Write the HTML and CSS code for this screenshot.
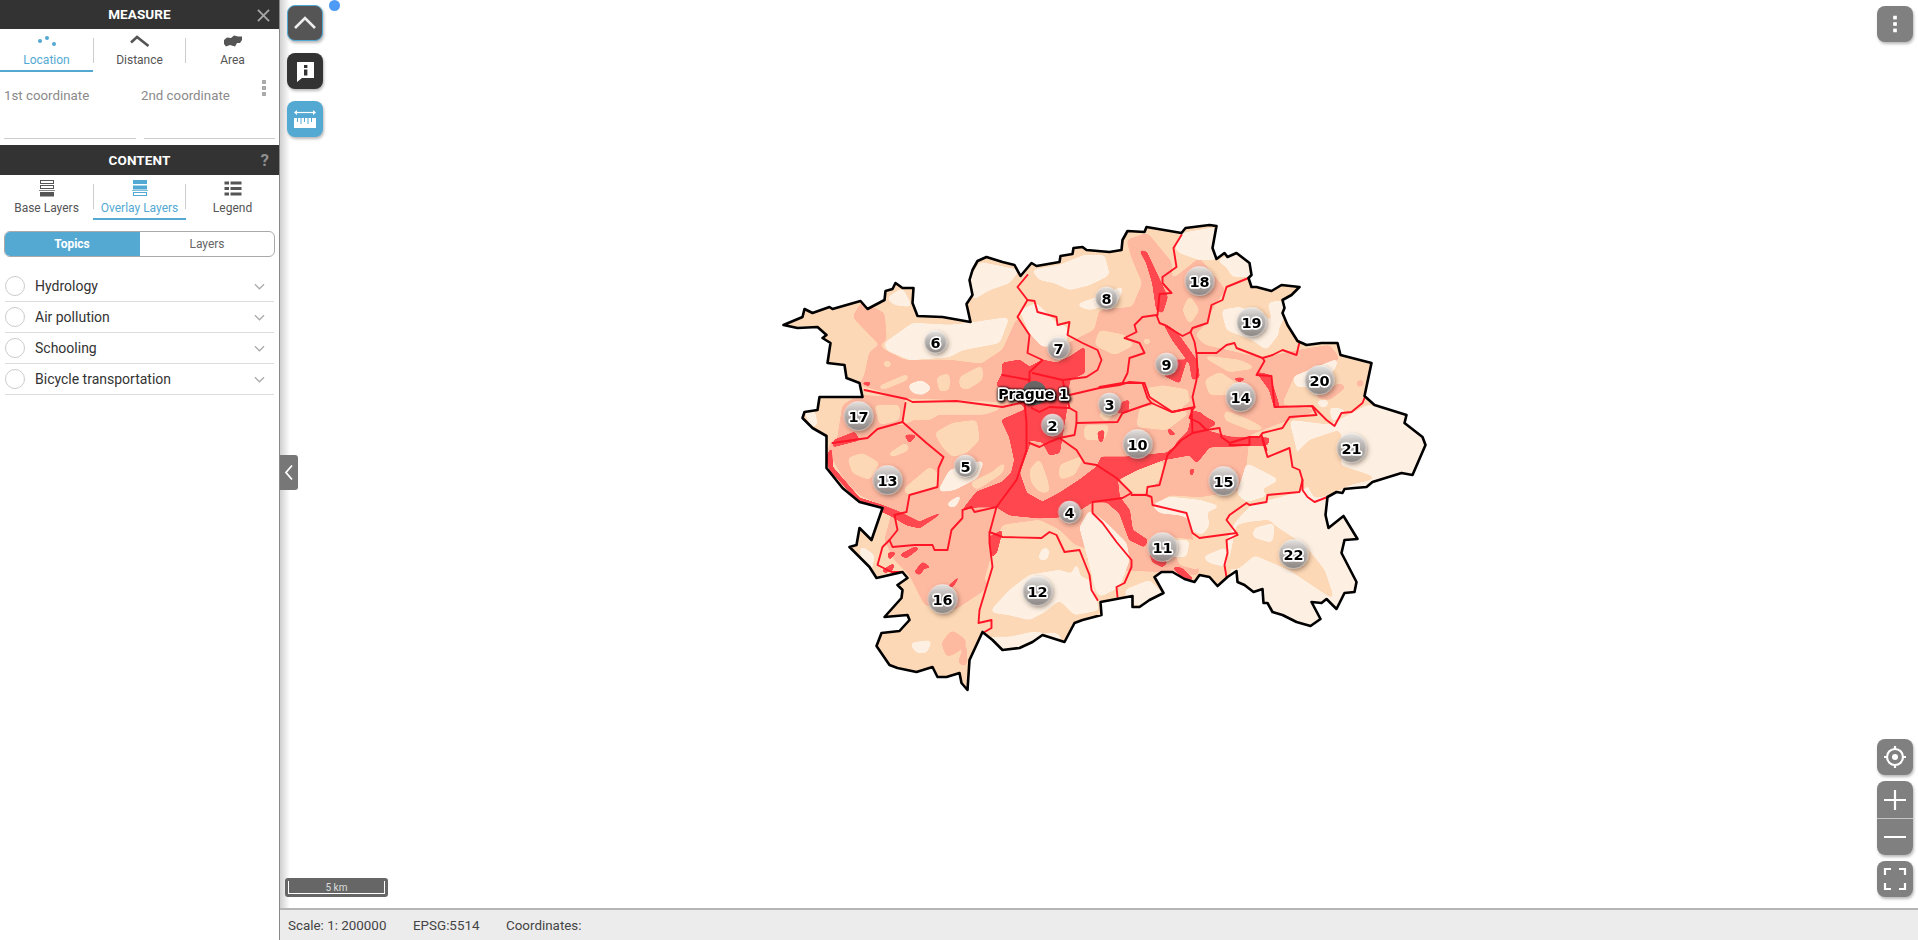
FILE: index.html
```html
<!DOCTYPE html>
<html lang="en">
<head>
<meta charset="utf-8">
<title>Prague map</title>
<link rel="stylesheet" href="styles.css">
</head>
<body>
<div class="app">
  <aside class="sidebar">
    <header class="panel-head panel-head-measure">
      <span class="panel-title">MEASURE</span>
      <svg class="panel-close" viewBox="0 0 14 14"><path d="M1 1 13 13M13 1 1 13"/></svg>
    </header>
    <nav class="tabs tabs-measure">
      <div class="tab active"><svg class="tab-icon" viewBox="0 0 20 12"><circle cx="3" cy="6" r="2"/><circle cx="10" cy="3" r="2"/><circle cx="17" cy="9" r="2"/></svg><span>Location</span></div>
      <div class="tab sep"><svg class="tab-icon" viewBox="0 0 20 12"><path class="line" d="M1 7.5 7 2 18.5 11"/></svg><span>Distance</span></div>
      <div class="tab"><svg class="tab-icon" viewBox="0 0 20 12"><path d="M1 5 4 2.5 8 3 11 .5 15 1.500 19 1.500 19 5 17 8 14 8 12 11.500 7 10 3 11.500 1 9Z"/></svg><span>Area</span></div>
    </nav>
    <section class="coords">
      <div class="coord"><label>1st coordinate</label></div>
      <div class="coord coord-second"><label>2nd coordinate</label></div>
      <div class="coord-more"><i></i><i></i><i></i></div>
    </section>
    <header class="panel-head panel-head-content">
      <span class="panel-title">CONTENT</span>
      <span class="panel-help">?</span>
    </header>
    <nav class="tabs tabs-content">
      <div class="tab"><svg class="tab-icon layers" viewBox="0 0 20 18"><rect class="o" x="3.5" y=".5" width="13" height="3"/><rect class="o" x="3.500" y="5.500" width="13" height="3"/><path class="hair" d="M2 10.500H18"/><rect x="3" y="12" width="14" height="4.500"/></svg><span>Base Layers</span></div>
      <div class="tab sep active"><svg class="tab-icon layers" viewBox="0 0 20 18"><rect x="3" y="0" width="14" height="4"/><rect x="3" y="5.500" width="14" height="4"/><path class="hair" d="M2 10.500H18"/><rect class="o" x="3.500" y="12.500" width="13" height="3"/></svg><span>Overlay Layers</span></div>
      <div class="tab"><svg class="tab-icon layers" viewBox="0 0 20 18"><rect x="1.500" y="1.500" width="4.500" height="3"/><rect x="7.500" y="1.500" width="11" height="3"/><rect x="1.500" y="7" width="4.500" height="3"/><rect x="7.500" y="7" width="11" height="3"/><rect x="1.500" y="12.500" width="4.500" height="3"/><rect x="7.500" y="12.500" width="11" height="3"/></svg><span>Legend</span></div>
    </nav>
    <div class="segment"><span class="seg seg-on">Topics</span><span class="seg">Layers</span></div>
    <ul class="topics">
      <li class="topic"><i class="radio"></i><span class="topic-name">Hydrology</span><svg class="chev" viewBox="0 0 12 7"><path d="M1 1 6 6 11 1"/></svg></li>
      <li class="topic"><i class="radio"></i><span class="topic-name">Air pollution</span><svg class="chev" viewBox="0 0 12 7"><path d="M1 1 6 6 11 1"/></svg></li>
      <li class="topic"><i class="radio"></i><span class="topic-name">Schooling</span><svg class="chev" viewBox="0 0 12 7"><path d="M1 1 6 6 11 1"/></svg></li>
      <li class="topic"><i class="radio"></i><span class="topic-name">Bicycle transportation</span><svg class="chev" viewBox="0 0 12 7"><path d="M1 1 6 6 11 1"/></svg></li>
    </ul>
  </aside>

  <main class="main">
    <div class="canvas">
      <svg class="map" viewBox="280 0 1638 908" xmlns="http://www.w3.org/2000/svg">
        <defs>
          <clipPath id="city"><path d="M784 325 803 317 805 309 813 313 830 307 833 309 861 301 868 309 885 300 886 291 893 289 896 283 903 288 914 288 913 303 918 316 943 317 971 322 967 304 973 295 970 280 973 270 978 261 987 257 1003 262 1015 265 1021 276 1032 263 1037 266 1060 262 1061 256 1073 254 1074 248 1083 247 1087 250 1110 252 1122 250 1123 240 1128 231 1145 232 1147 227 1182 233 1186 228 1210 225 1217 226 1213 248 1217 259 1225 253 1228 257 1237 253 1250 263 1252 275 1249 278 1252 287 1257 287 1272 291 1282 285 1300 287 1292 295 1283 300 1285 308 1283 313 1288 325 1298 341 1307 345 1322 343 1338 343 1341 355 1372 363 1365 396 1375 405 1407 415 1405 423 1423 437 1426 445 1413 475 1402 473 1373 482 1367 487 1355 488 1345 489 1343 493 1337 492 1328 497 1326 515 1329 528 1344 516 1358 539 1345 540 1342 553 1357 582 1355 592 1345 593 1337 609 1327 599 1322 603 1312 602 1321 619 1311 626 1297 622 1283 615 1273 612 1268 603 1264 603 1263 589 1254 592 1245 585 1238 582 1237 571 1228 577 1218 586 1210 577 1200 575 1195 582 1185 579 1173 572 1162 572 1155 577 1164 593 1150 600 1140 607 1133 607 1133 596 1101 602 1102 615 1083 620 1075 623 1065 642 1043 635 1033 642 1020 648 1003 650 993 640 983 632 970 660 968 690 962 683 960 673 947 677 938 677 933 667 917 672 898 668 890 665 877 646 882 633 900 631 910 620 908 615 885 617 902 598 903 590 898 585 908 578 903 572 877 578 870 567 858 555 850 547 857 545 860 528 872 540 883 508 860 502 843 488 827 468 827 436 813 428 803 418 805 412 818 410 820 397 847 397 863 397 860 383 847 378 845 365 828 363 831 343 823 338 827 335 818 327 798 328Z"/></clipPath>
          <filter id="goo" filterUnits="userSpaceOnUse" x="700" y="150" width="800" height="600" color-interpolation-filters="sRGB">
            <feGaussianBlur stdDeviation="2.400"/>
            <feColorMatrix type="matrix" values="1 0 0 0 0 0 1 0 0 0 0 0 1 0 0 0 0 0 12 -5"/>
          </filter>
          <filter id="gooRed" filterUnits="userSpaceOnUse" x="700" y="150" width="800" height="600" color-interpolation-filters="sRGB">
            <feGaussianBlur stdDeviation="1.400"/>
            <feColorMatrix type="matrix" values="1 0 0 0 0 0 1 0 0 0 0 0 1 0 0 0 0 0 12 -4"/>
          </filter>
          <linearGradient id="bub" x1="0" y1="0" x2="0" y2="1">
            <stop offset="0" stop-color="#e6e4e3"/>
            <stop offset=".35" stop-color="#bdb9b7"/>
            <stop offset="1" stop-color="#8d8886"/>
          </linearGradient>
          <filter id="bubshadow" x="-50%" y="-50%" width="200%" height="200%">
            <feDropShadow dx="1.500" dy="2" stdDeviation="2" flood-color="#3a2a20" flood-opacity=".5"/>
          </filter>
        </defs>

        <g clip-path="url(#city)">
          <rect class="zone-orange" x="760" y="200" width="700" height="520"/>
          <g class="zone-light" filter="url(#goo)">
            <path d="M1236 522 1252 505 1300 492 1320 480 1300 460 1290 420 1330 425 1368 405 1440 420 1440 640 1210 640 1232 570 1228 540Z"/>
            <path d="M784 325 818 327 831 343 845 365 860 383 850 372 836 345 810 332Z"/>
          </g>
          <g class="zone-salmon" filter="url(#goo)">
            <path d="M1127 240 1148 233 1172 262 1172 280 1200 258 1226 290 1215 305 1205 325 1195 335 1205 345 1262 358 1300 350 1330 345 1340 358 1325 372 1295 375 1282 405 1320 410 1275 425 1250 435 1247 463 1243 490 1200 497 1170 495 1155 505 1190 520 1195 550 1200 575 1165 572 1120 570 1105 535 1090 560 1060 555 1010 555 1000 560 985 590 955 610 925 605 910 575 895 560 885 540 893 510 860 495 845 480 828 450 833 440 870 430 905 425 925 415 985 415 1000 410 1010 385 983 363 1003 350 1018 317 1030 335 1065 345 1095 330 1100 310 1133 307 1143 283 1133 260Z"/>
            <path d="M853 317 862 302 885 313 887 340 870 352 865 375 860 385 905 398 960 400 1005 402 1015 380 990 365 950 360 905 360 885 350Z"/>
            <path d="M843 405 860 395 905 398 903 420 868 432 838 438Z"/>
            <path d="M1340 383 1347 387 1330 400 1313 397Z"/>
            <path d="M1357 380 1365 380 1363 387 1357 387Z"/>
            <path d="M942 643 952 630 967 640 957 653 947 657Z"/>
            <path d="M958 663 968 640 967 667Z"/>
            <path d="M1245 540 1257 542 1263 545 1255 550Z"/>
          </g>
          <g class="zone-orange" filter="url(#goo)">
            <path d="M848 458 863 453 880 463 870 480 853 473Z"/>
            <path d="M887 455 907 442 910 450 893 457Z"/>
            <path d="M903 490 930 467 938 472 937 488 910 495Z"/>
            <path d="M935 433 953 423 977 420 980 440 967 453 953 457 943 447Z"/>
            <path d="M907 407 930 405 947 410 930 420 910 420Z"/>
            <path d="M970 483 993 472 1007 460 1003 473 977 490Z"/>
            <path d="M1030 470 1040 458 1048 480 1050 493 1040 492 1032 483Z"/>
            <path d="M1120 480 1137 470 1165 460 1160 480 1147 493 1133 493 1123 485Z"/>
            <path d="M1003 525 1040 520 1060 530 1075 545 1090 550 1085 565 1055 560 1040 565 1005 575 995 590 985 580 995 545Z"/>
            <path d="M883 360 893 362 890 368 885 367Z"/>
            <path d="M877 387 910 373 908 380 883 390Z"/>
            <path d="M937 377 950 373 950 390 940 392Z"/>
            <path d="M960 377 983 365 983 380 967 390 960 387Z"/>
            <path d="M875 405 900 405 900 420 880 425Z"/>
            <path d="M1205 380 1220 372 1240 385 1228 395 1210 395Z"/>
            <path d="M1225 410 1250 420 1268 430 1250 430 1225 420Z"/>
            <path d="M1200 355 1240 360 1258 368 1230 372Z"/>
            <path d="M1237 525 1250 522 1270 520 1277 527 1305 545 1325 570 1335 600 1320 590 1290 570 1255 555 1240 568 1228 570Z"/>
            <path d="M1310 440 1340 430 1345 450 1340 465 1378 478 1350 485 1330 495 1315 498 1305 480 1295 455Z"/>
            <path d="M1100 330 1125 335 1135 345 1115 355 1095 345Z"/>
            <path d="M1160 385 1190 390 1185 405 1160 400Z"/>
            <path d="M1085 425 1110 425 1105 440 1085 440Z"/>
            <path d="M1190 295 1200 310 1190 325 1183 310Z"/>
            <path d="M1170 537 1195 540 1200 570 1180 565Z"/>
            <path d="M1060 465 1085 455 1075 475 1060 480Z"/>
            <path d="M1140 408 1168 403 1190 413 1167 430 1137 427Z"/>
            <path d="M1147 387 1167 387 1193 400 1177 410 1153 400Z"/>
            <path d="M1097 413 1117 410 1107 422Z"/>
            <path d="M1143 338 1155 340 1145 346Z"/>
          </g>
          <g class="zone-light" filter="url(#goo)">
            <path d="M885 343 913 323 950 325 970 323 1010 317 1000 343 963 350 950 357 910 360 887 350Z"/>
            <path d="M973 300 970 280 980 262 1020 270 1010 283 990 290Z"/>
            <path d="M887 298 903 288 913 307 895 305Z"/>
            <path d="M908 385 922 380 933 388 923 395 913 393Z"/>
            <path d="M928 375 947 367 940 370 930 377Z"/>
            <path d="M1032 270 1060 265 1085 255 1105 255 1110 275 1090 285 1070 290 1055 283 1040 280Z"/>
            <path d="M1075 305 1095 298 1115 290 1125 285 1118 302 1090 310Z"/>
            <path d="M1020 310 1037 303 1057 323 1068 327 1067 343 1043 347 1030 333Z"/>
            <path d="M1183 233 1217 227 1213 248 1217 260 1200 260 1180 253 1175 247Z"/>
            <path d="M1217 260 1237 253 1250 263 1252 277 1233 277 1227 267Z"/>
            <path d="M1222 310 1240 307 1267 317 1280 333 1267 350 1253 340 1227 330Z"/>
            <path d="M1268 303 1283 300 1285 317 1277 333Z"/>
            <path d="M1293 377 1317 367 1340 358 1333 373 1313 387 1297 387Z"/>
            <path d="M1317 400 1330 400 1327 407 1320 407Z"/>
            <path d="M1330 407 1348 410 1333 423Z"/>
            <path d="M1152 505 1170 497 1200 500 1217 505 1225 505 1207 512 1210 525 1203 535 1192 530 1190 518 1180 515 1160 513Z"/>
            <path d="M1247 463 1280 480 1260 490 1270 495 1247 502 1237 493 1243 477Z"/>
            <path d="M1255 528 1275 523 1273 543 1263 540 1253 537Z"/>
            <path d="M1080 527 1090 510 1107 523 1127 543 1130 560 1120 587 1100 597 1093 577 1088 557Z"/>
            <path d="M990 612 1010 590 1030 575 1060 570 1090 580 1100 610 1075 615 1060 600 1045 612 1030 620 1010 615Z"/>
            <path d="M987 637 1010 637 1033 632 1057 633 1067 642 1043 635 1033 642 1020 648 1003 650Z"/>
            <path d="M1077 560 1083 587 1080 613 1068 607 1068 590Z"/>
            <path d="M1043 548 1050 548 1048 560 1038 560Z"/>
            <path d="M910 643 933 640 927 653 917 653Z"/>
            <path d="M860 545 875 555 872 572 862 560Z"/>
            <path d="M1125 590 1150 580 1165 595 1140 605 1130 605Z"/>
            <path d="M1170 540 1190 540 1187 557 1173 557Z"/>
            <path d="M1203 557 1227 547 1227 567 1210 563Z"/>
            <path d="M805 412 815 410 818 425 812 428Z"/>
            <path d="M950 470 985 460 978 478 955 490 938 492Z"/>
            <path d="M945 505 965 492 955 508Z"/>
          </g>
          <g class="zone-red" filter="url(#gooRed)">
            <path d="M1002 420 1025 410 1028 428 1030 445 1020 473 1027 493 1043 502 1060 493 1080 480 1097 467 1102 457 1127 457 1167 453 1187 438 1193 413 1200 412 1215 425 1205 430 1230 437 1270 438 1268 445 1210 447 1197 463 1190 455 1163 460 1137 470 1118 480 1120 497 1130 510 1133 530 1148 540 1145 547 1130 540 1120 513 1107 502 1093 502 1080 510 1060 517 1040 518 1010 515 997 507 977 507 963 510 977 492 1003 482 1012 473 1015 460 1010 437Z"/>
            <path d="M997 385 1003 373 1003 363 1020 360 1030 367 1043 360 1057 363 1070 357 1085 347 1085 373 1070 380 1067 410 1060 453 1050 455 1043 442 1030 440 1025 407Z"/>
            <path d="M835 440 855 432 860 440 833 447Z"/>
            <path d="M827 457 832 447 833 467 860 498 882 505 900 512 920 522 947 510 920 528 907 525 890 515 860 502 830 470Z"/>
            <path d="M860 383 871 382 870 386Z"/>
            <path d="M905 435 917 435 910 443Z"/>
            <path d="M1140 250 1147 252 1157 273 1168 297 1163 313 1157 310 1153 283 1147 263Z"/>
            <path d="M1163 322 1177 332 1197 360 1200 377 1193 380 1190 363 1173 340Z"/>
            <path d="M1173 360 1187 360 1182 376 1180 383 1163 375 1177 373Z"/>
            <path d="M1257 372 1270 375 1280 407 1275 408 1270 390Z"/>
            <path d="M1233 378 1247 378 1240 382Z"/>
            <path d="M1193 410 1217 423 1203 430 1193 443 1175 445 1190 430Z"/>
            <path d="M1098 432 1105 430 1103 442 1100 442Z"/>
            <path d="M1168 427 1177 435 1170 435Z"/>
            <path d="M1190 470 1195 468 1192 478Z"/>
            <path d="M1123 402 1130 400 1128 413 1117 413Z"/>
            <path d="M883 570 895 563 893 570 885 573Z"/>
            <path d="M888 553 897 552 890 560Z"/>
            <path d="M900 555 915 547 920 548 907 558Z"/>
            <path d="M915 572 923 562 932 568 925 568 920 575Z"/>
            <path d="M948 587 963 573 953 587Z"/>
            <path d="M990 537 1003 530 997 553 992 557Z"/>
            <path d="M1150 553 1168 562 1163 567 1153 562Z"/>
            <path d="M1173 567 1182 568 1195 580 1183 578Z"/>
          </g>
        </g>

        <g class="borders">
          <path d="M1028 275 1018 287 1028 300 1035 301 1038 312 1057 317 1058 325 1070 322 1068 335 1083 343 1098 350 1102 360 1098 370 1087 377 1063 380 1033 373"/>
          <path d="M1028 300 1018 317 1030 335 1028 353 1043 360 1030 372 1030 380 1003 375"/>
          <path d="M865 390 907 399 913 402 957 401 1003 407 1025 402 1027 423 1027 450 1017 480 997 507 990 533 990 543 993 567 980 610 979 623 992 620 992 628 985 632"/>
          <path d="M906 403 903 422 878 429 868 438 833 443"/>
          <path d="M903 422 927 443 944 457 939 468 938 487 910 495 907 512 895 515 898 530 890 540 893 547 915 545 933 545 935 550 948 550 952 530 963 518 963 510 972 507 975 512 997 507"/>
          <path d="M890 540 883 547 878 565 892 572 903 572"/>
          <path d="M990 532 1003 537 1042 538 1050 532 1057 535 1065 552 1080 550 1090 575 1092 590 1098 600"/>
          <path d="M1030 443 1040 447 1050 442 1060 438 1077 450 1085 463 1097 465 1117 478 1132 493 1123 498 1093 502 1093 513 1103 523 1117 542 1132 560 1132 567 1125 583 1117 587 1118 597"/>
          <path d="M1030 380 1027 402M1070 395 1100 388 1120 385 1130 382 1143 383 1148 398 1152 403 1172 412 1192 408 1193 433 1182 440 1168 455 1160 485 1148 487 1147 495 1132 495"/>
          <path d="M1032 408 1040 412 1050 407 1070 408 1077 412 1077 423 1118 422 1123 413 1152 403"/>
          <path d="M1070 408 1067 395 1063 380"/>
          <path d="M1147 495 1152 497 1153 505 1187 513 1193 533 1200 538 1237 533 1227 520 1230 515 1247 503 1250 505 1267 502 1268 495 1300 492 1303 480 1300 470 1293 467 1290 448 1268 457 1263 440"/>
          <path d="M1238 535 1227 540 1228 553 1225 565 1227 577"/>
          <path d="M1237 533 1238 535"/>
          <path d="M1303 480 1303 490 1308 497 1315 502 1328 497"/>
          <path d="M1100 387 1123 383 1128 373 1130 358 1145 353 1140 343 1125 338 1137 332 1135 325 1143 317 1157 315 1160 323 1165 325 1183 336 1191 332 1195 342 1197 353 1198 370 1197 380 1193 397 1195 407 1173 412 1150 397 1145 383 1123 383"/>
          <path d="M1197 353 1217 353 1227 345 1235 343 1237 348 1263 358 1265 361 1257 375 1272 376 1275 407 1313 406 1327 420 1335 426 1342 413 1352 412 1363 403 1365 398"/>
          <path d="M1263 358 1273 355 1283 350 1297 355 1300 342"/>
          <path d="M1182 235 1174 248 1177 267 1163 277 1163 283 1172 293 1160 294 1158 315"/>
          <path d="M1249 278 1227 287 1223 300 1212 305 1208 323 1193 328 1191 332"/>
          <path d="M1195 407 1193 410 1190 418 1200 423 1207 430 1220 428 1222 437 1230 443 1250 437 1260 437 1263 433 1283 428 1290 417 1317 415 1313 407"/>
          <path d="M1193 433 1207 430M1230 445 1250 445 1250 437M1262 435 1267 450"/>
          <path d="M1077 423 1075 435 1060 438"/>
        </g>
        <path class="outline" d="M784 325 803 317 805 309 813 313 830 307 833 309 861 301 868 309 885 300 886 291 893 289 896 283 903 288 914 288 913 303 918 316 943 317 971 322 967 304 973 295 970 280 973 270 978 261 987 257 1003 262 1015 265 1021 276 1032 263 1037 266 1060 262 1061 256 1073 254 1074 248 1083 247 1087 250 1110 252 1122 250 1123 240 1128 231 1145 232 1147 227 1182 233 1186 228 1210 225 1217 226 1213 248 1217 259 1225 253 1228 257 1237 253 1250 263 1252 275 1249 278 1252 287 1257 287 1272 291 1282 285 1300 287 1292 295 1283 300 1285 308 1283 313 1288 325 1298 341 1307 345 1322 343 1338 343 1341 355 1372 363 1365 396 1375 405 1407 415 1405 423 1423 437 1426 445 1413 475 1402 473 1373 482 1367 487 1355 488 1345 489 1343 493 1337 492 1328 497 1326 515 1329 528 1344 516 1358 539 1345 540 1342 553 1357 582 1355 592 1345 593 1337 609 1327 599 1322 603 1312 602 1321 619 1311 626 1297 622 1283 615 1273 612 1268 603 1264 603 1263 589 1254 592 1245 585 1238 582 1237 571 1228 577 1218 586 1210 577 1200 575 1195 582 1185 579 1173 572 1162 572 1155 577 1164 593 1150 600 1140 607 1133 607 1133 596 1101 602 1102 615 1083 620 1075 623 1065 642 1043 635 1033 642 1020 648 1003 650 993 640 983 632 970 660 968 690 962 683 960 673 947 677 938 677 933 667 917 672 898 668 890 665 877 646 882 633 900 631 910 620 908 615 885 617 902 598 903 590 898 585 908 578 903 572 877 578 870 567 858 555 850 547 857 545 860 528 872 540 883 508 860 502 843 488 827 468 827 436 813 428 803 418 805 412 818 410 820 397 847 397 863 397 860 383 847 378 845 365 828 363 831 343 823 338 827 335 818 327 798 328Z"/>

        <g class="pins">
          <circle cx="1035" cy="393" r="12" fill="#6a6665"/>
          <g filter="url(#bubshadow)">
            <circle class="bubble" cx="936" cy="342" r="11" fill="url(#bub)"/>
            <circle class="bubble" cx="1059" cy="348" r="11" fill="url(#bub)"/>
            <circle class="bubble" cx="1107" cy="298" r="11" fill="url(#bub)"/>
            <circle class="bubble" cx="1167" cy="364" r="11" fill="url(#bub)"/>
            <circle class="bubble" cx="1110" cy="404" r="11" fill="url(#bub)"/>
            <circle class="bubble" cx="1053" cy="425" r="11" fill="url(#bub)"/>
            <circle class="bubble" cx="966" cy="466" r="11" fill="url(#bub)"/>
            <circle class="bubble" cx="1070" cy="512" r="11" fill="url(#bub)"/>
            <circle class="bubble" cx="1200" cy="281" r="14.500" fill="url(#bub)"/>
            <circle class="bubble" cx="1252" cy="322" r="14.500" fill="url(#bub)"/>
            <circle class="bubble" cx="1320" cy="380" r="14.500" fill="url(#bub)"/>
            <circle class="bubble" cx="1241" cy="397" r="14.500" fill="url(#bub)"/>
            <circle class="bubble" cx="1138" cy="444" r="14.500" fill="url(#bub)"/>
            <circle class="bubble" cx="1352" cy="448" r="14.500" fill="url(#bub)"/>
            <circle class="bubble" cx="1224" cy="481" r="14.500" fill="url(#bub)"/>
            <circle class="bubble" cx="1294" cy="554" r="14.500" fill="url(#bub)"/>
            <circle class="bubble" cx="1163" cy="547" r="14.500" fill="url(#bub)"/>
            <circle class="bubble" cx="1038" cy="591" r="14.500" fill="url(#bub)"/>
            <circle class="bubble" cx="943" cy="599" r="14.500" fill="url(#bub)"/>
            <circle class="bubble" cx="888" cy="480" r="14.500" fill="url(#bub)"/>
            <circle class="bubble" cx="859" cy="416" r="14.500" fill="url(#bub)"/>
          </g>
          <text class="pin" x="936" y="347.500">6</text>
          <text class="pin" x="1059" y="353.500">7</text>
          <text class="pin" x="1107" y="303.500">8</text>
          <text class="pin" x="1167" y="369.500">9</text>
          <text class="pin" x="1110" y="409.500">3</text>
          <text class="pin" x="1053" y="430.500">2</text>
          <text class="pin" x="966" y="471.500">5</text>
          <text class="pin" x="1070" y="517.500">4</text>
          <text class="pin" x="1200" y="286.500">18</text>
          <text class="pin" x="1252" y="327.500">19</text>
          <text class="pin" x="1320" y="385.500">20</text>
          <text class="pin" x="1241" y="402.500">14</text>
          <text class="pin" x="1138" y="449.500">10</text>
          <text class="pin" x="1352" y="453.500">21</text>
          <text class="pin" x="1224" y="486.500">15</text>
          <text class="pin" x="1294" y="559.500">22</text>
          <text class="pin" x="1163" y="552.500">11</text>
          <text class="pin" x="1038" y="596.500">12</text>
          <text class="pin" x="943" y="604.500">16</text>
          <text class="pin" x="888" y="485.500">13</text>
          <text class="pin" x="859" y="421.500">17</text>
          <text class="pin pin-name" x="1034" y="399">Prague 1</text>
        </g>
      </svg>

      <span class="dot"></span>
      <div class="tools tools-left">
        <button class="tool tool-up"><svg viewBox="0 0 24 24"><path d="M2 17 12 7 22 17"/></svg></button>
        <button class="tool tool-info"><svg viewBox="0 0 24 24"><path class="solid" d="M4 3H21V19H9L4 23V19Z"/><rect class="dark" x="11" y="6" width="3.400" height="3"/><rect class="dark" x="11" y="10.500" width="3.400" height="6"/></svg></button>
        <button class="tool tool-measure"><svg viewBox="0 0 24 24"><path class="thin" d="M2 5.500H22"/><path class="solid" d="M1 5.500 4 3V8ZM23 5.500 20 3V8Z"/><path class="solid" d="M1 11H23V21H1Z"/><path class="tick" d="M4.500 11V15M8 11V17M11.500 11V15M15 11V17M18.500 11V15"/></svg></button>
      </div>
      <button class="tool tool-gray tool-more"><svg viewBox="0 0 24 24"><rect class="solid" x="10" y="3" width="4" height="4"/><rect class="solid" x="10" y="10" width="4" height="4"/><rect class="solid" x="10" y="17" width="4" height="4"/></svg></button>
      <div class="tools tools-right">
        <button class="tool tool-gray"><svg viewBox="0 0 24 24"><circle class="ring" cx="12" cy="12" r="8"/><circle class="solid" cx="12" cy="12" r="3"/><path class="ring" d="M12 1V4M12 20V23M1 12H4M20 12H23"/></svg></button>
        <div class="zoombox">
          <button class="tool tool-gray tool-zoom"><svg viewBox="0 0 24 24"><path class="ring" d="M12 2V22M1 12H23"/></svg></button>
          <button class="tool tool-gray tool-zoom"><svg viewBox="0 0 24 24"><path class="ring" d="M1 12H23"/></svg></button>
        </div>
        <button class="tool tool-gray"><svg viewBox="0 0 24 24"><path class="ring" d="M2 8V2H8M16 2H22V8M22 16V22H16M8 22H2V16"/></svg></button>
      </div>
      <div class="handle"><svg viewBox="0 0 10 16"><path d="M8 1 2 8 8 15"/></svg></div>
      <div class="scale"><div class="scale-inner">5 km</div></div>
    </div>
    <footer class="status">
      <span class="status-scale">Scale: 1: 200000</span>
      <span class="status-epsg">EPSG:5514</span>
      <span>Coordinates:</span>
    </footer>
  </main>
</div>
</body>
</html>
```
FILE: styles.css
```css
* { box-sizing: border-box; }
html, body { margin: 0; height: 100%; overflow: hidden; background: #fff; }
body { font-family: Roboto, "Liberation Sans", sans-serif; color: #333; }
ul { list-style: none; margin: 0; padding: 0; }
button { border: 0; padding: 0; font: inherit; }

.app { display: flex; height: 940px; }

/* sidebar */
.sidebar { width: 279px; flex: none; display: flex; flex-direction: column; background: #fff; }
.panel-head { display: flex; align-items: center; justify-content: center; position: relative; background: #333; color: #fff; }
.panel-head-measure { height: 29px; padding-bottom: 1px; }
.panel-head-content { height: 30px; }
.panel-title { font-size: 13.5px; font-weight: 700; letter-spacing: .1px; }
.panel-close { position: absolute; right: 9px; top: 9px; width: 13px; height: 13px; fill: none; stroke: #a6a6a6; stroke-width: 2; }
.panel-help { position: absolute; right: 10px; top: 5px; color: #8f8f8f; font-size: 17px; font-weight: 700; }

.tabs { display: flex; }
.tabs-measure { height: 43px; }
.tabs-content { height: 45px; }
.tab { position: relative; flex: 0 0 93px; display: flex; flex-direction: column; align-items: center; font-size: 12px; line-height: 14px; color: #555; border-bottom: 2px solid transparent; padding-top: 5px; }
.tabs-measure .tab span { margin-top: 6px; }
.tabs-content .tab span { margin-top: 3px; }
.tab.active { color: #54a9d3; border-bottom-color: #54a9d3; }
.tab.sep::before, .tab.sep::after { content: ""; position: absolute; top: 9px; height: 25px; width: 1px; background: #ccc; }
.tab.sep::before { left: 0; }
.tab.sep::after { right: 0; }
.tab-icon { width: 20px; height: 12px; fill: #555; margin-top: 1px; }
.tab.active .tab-icon { fill: #54a9d3; }
.tab-icon .line { fill: none; stroke: #555; stroke-width: 2.6; }
.tab-icon.layers { height: 18px; margin-top: 0; }
.tab-icon .o { fill: none; stroke: #555; stroke-width: 1; }
.tab.active .tab-icon .o { stroke: #54a9d3; }
.tab-icon .hair { fill: none; stroke: #888; stroke-width: 1; }
.tab.active .tab-icon .hair { stroke: #7fbfe0; }

.coords { height: 73px; display: flex; position: relative; padding: 0 4px; gap: 8px; }
.coord { flex: 0 0 132px; height: 67px; border-bottom: 1px solid #ccc; padding-top: 15px; font-size: 13.3px; line-height: 18px; color: #8a8a8a; }
.coord-second { flex-basis: 131px; }
.coord-second label { margin-left: -3px; }
.coord-more { position: absolute; right: 13px; top: 8px; display: flex; flex-direction: column; gap: 2px; }
.coord-more i { display: block; width: 4px; height: 4px; background: #aaa; }

.segment { display: flex; margin: 11px 4px 0 4px; height: 26px; border-radius: 6px; border: 1px solid #aaa; overflow: hidden; font-size: 12px; }
.seg { flex: 1 1 0; display: flex; align-items: center; justify-content: center; color: #666; }
.seg-on { flex: 0 0 136px; background: #54a9d3; color: #fff; font-weight: 700; margin: -1px 0 -1px -1px; }

.topics { margin: 14px 5px 0 5px; }
.topic { height: 31px; display: flex; align-items: center; border-bottom: 1px solid #ddd; }
.radio { width: 20px; height: 20px; flex: none; border: 1px solid #ccc; border-radius: 50%; }
.topic-name { flex: 1; margin-left: 10px; font-size: 14px; color: #333; }
.chev { width: 11px; height: 7px; margin-right: 9px; fill: none; stroke: #aaa; stroke-width: 1.3; }

/* main */
.main { flex: 1; display: flex; flex-direction: column; min-width: 0; border-left: 1px solid #888; }
.canvas { position: relative; flex: 1; min-height: 0; overflow: hidden; background: #fff; }
.canvas::before { content: ""; position: absolute; left: 0; top: 0; bottom: 0; width: 10px; background: linear-gradient(90deg, #d0d0d0, #fff); }
.map { position: absolute; left: -1px; top: 0; width: 1639px; height: 908px; display: block; }
.zone-orange { fill: #fdd8b6; }
.zone-light { fill: #fdf0e3; }
.zone-salmon { fill: #feb9a1; }
.zone-red { fill: #ff474f; }
.borders path { fill: none; stroke: #ff1526; stroke-width: 1.9; stroke-linejoin: round; stroke-linecap: round; }
.outline { fill: none; stroke: #000; stroke-width: 2.6; stroke-linejoin: round; }
.bubble { stroke: rgba(255,255,255,.35); stroke-width: 1; opacity: .95; }
.pin { font-family: "DejaVu Sans", sans-serif; font-weight: 700; font-size: 14.5px; text-anchor: middle; fill: #000; stroke: #fff; stroke-width: 3.4px; paint-order: stroke; stroke-linejoin: round; }
.pin-name { font-size: 14px; filter: drop-shadow(1px 1px 1.5px #000) drop-shadow(0 0 1px #000); }

.dot { position: absolute; top: 0; left: 49px; width: 11px; height: 11px; border-radius: 50%; background: #4e9bf5; }
.tools { position: absolute; display: flex; flex-direction: column; }
.tools-left { left: 7px; top: 5px; gap: 12px; }
.tools-right { right: 5px; bottom: 11px; gap: 6px; }
.tool { width: 36px; height: 36px; border-radius: 8px; display: flex; align-items: center; justify-content: center; box-shadow: 1px 2px 3px rgba(0,0,0,.28); }
.tool svg { width: 24px; height: 24px; fill: none; }
.tool .solid { fill: #fff; stroke: none; }
.tool .ring { fill: none; stroke: #fff; stroke-width: 2.2; }
.tool-up { background: #555; border: 1px solid #54a9d3; }
.tool-up path { stroke: #eee; stroke-width: 2.6; }
.tool-info { background: #333; }
.tool-info .dark { fill: #333; }
.tool-measure { background: #54a9d3; }
.tool-measure .thin { stroke: #fff; stroke-width: 1.2; }
.tool-measure .tick { stroke: #54a9d3; stroke-width: 1; }
.tool-gray { background: #808080; }
.tool-more { position: absolute; right: 5px; top: 6px; }
.tool-more svg { width: 22px; height: 22px; }
.zoombox { display: flex; flex-direction: column; border-radius: 8px; overflow: hidden; box-shadow: 1px 2px 3px rgba(0,0,0,.28); }
.tool-zoom { border-radius: 0; box-shadow: none; height: 37px; }
.tool-zoom + .tool-zoom { border-top: 1px solid #c4c4c4; height: 37px; }
.handle { position: absolute; left: 0; top: 455px; width: 18px; height: 35px; background: #777; border-radius: 0 3px 3px 0; display: flex; align-items: center; justify-content: center; }
.handle svg { width: 10px; height: 17px; fill: none; stroke: #fff; stroke-width: 1.8; }
.scale { position: absolute; left: 5px; top: 878px; width: 103px; height: 19px; padding: 3px; background: #666; border-radius: 3px; }
.scale-inner { height: 13px; border: 1px solid #fff; border-top: 0; color: #ddd; font-size: 10px; line-height: 13px; text-align: center; }

.status { height: 32px; flex: none; display: flex; align-items: center; padding-left: 8px; background: #ececec; border-top: 2px solid #b5b5b5; font-size: 13.4px; color: #444; }
.status-scale { width: 125px; }
.status-epsg { width: 93px; }
```
